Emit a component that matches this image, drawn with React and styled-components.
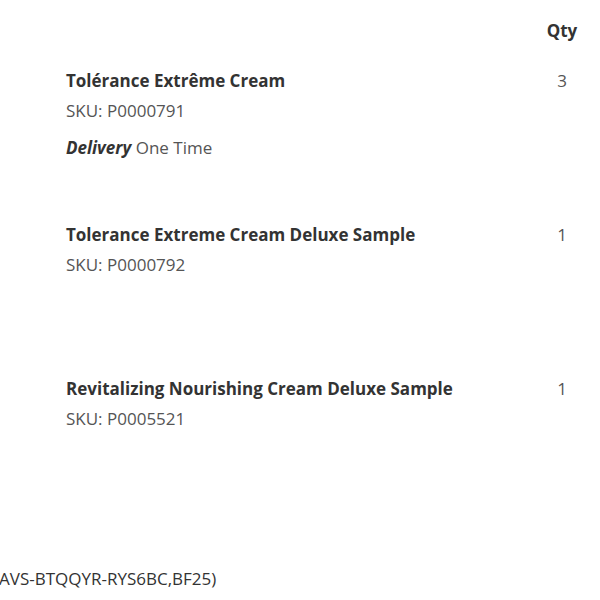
import React from "react";
import styled, { createGlobalStyle } from "styled-components";

const Global = createGlobalStyle`
  html, body { margin: 0; padding: 0; background: #fff; }
  body { font-family: "Open Sans", "Noto Sans", sans-serif; color: #333; }
`;

const Page = styled.div`
  width: 600px;
  height: 600px;
  overflow: hidden;
  display: flex;
  flex-direction: column;
`;

const Header = styled.div`
  display: grid;
  grid-template-columns: 1fr 64px;
  padding: 19px 6px 0 66px;
  height: 50px;
  box-sizing: border-box;
`;

const QtyHead = styled.div`
  font-weight: 700;
  font-size: 17px;
  line-height: 24px;
  text-align: center;
  color: #333;
`;

const Row = styled.div`
  display: grid;
  grid-template-columns: 1fr 64px;
  padding: 19px 6px 0 66px;
  height: 154px;
  box-sizing: border-box;
`;

const Info = styled.div`
  display: flex;
  flex-direction: column;
`;

const Title = styled.div`
  font-weight: 700;
  font-size: 17px;
  line-height: 24px;
  color: #333;
`;

const Meta = styled.div`
  font-size: 17px;
  line-height: 24px;
  color: #555;
  margin-top: ${(p) => p.$gap || 6}px;
`;

const Em = styled.span`
  font-weight: 700;
  font-style: italic;
  color: #333;
`;

const Qty = styled.div`
  font-size: 17px;
  line-height: 24px;
  text-align: center;
  color: #555;
`;

const Footer = styled.div`
  font-size: 17px;
  line-height: 24px;
  color: #333;
  margin-top: 55px;
  text-indent: -1px;
`;

const items = [
  { name: "Tolérance Extrême Cream", sku: "P0000791", qty: 3, delivery: "One Time" },
  { name: "Tolerance Extreme Cream Deluxe Sample", sku: "P0000792", qty: 1 },
  { name: "Revitalizing Nourishing Cream Deluxe Sample", sku: "P0005521", qty: 1 },
];

export default function App() {
  return (
    <Page>
      <Global />
      <Header>
        <div />
        <QtyHead>Qty</QtyHead>
      </Header>
      {items.map((it) => (
        <Row key={it.sku}>
          <Info>
            <Title>{it.name}</Title>
            <Meta>SKU: {it.sku}</Meta>
            {it.delivery && (
              <Meta $gap={13}>
                <Em>Delivery</Em> {it.delivery}
              </Meta>
            )}
          </Info>
          <Qty>{it.qty}</Qty>
        </Row>
      ))}
      <Footer>AVS-BTQQYR-RYS6BC,BF25)</Footer>
    </Page>
  );
}
